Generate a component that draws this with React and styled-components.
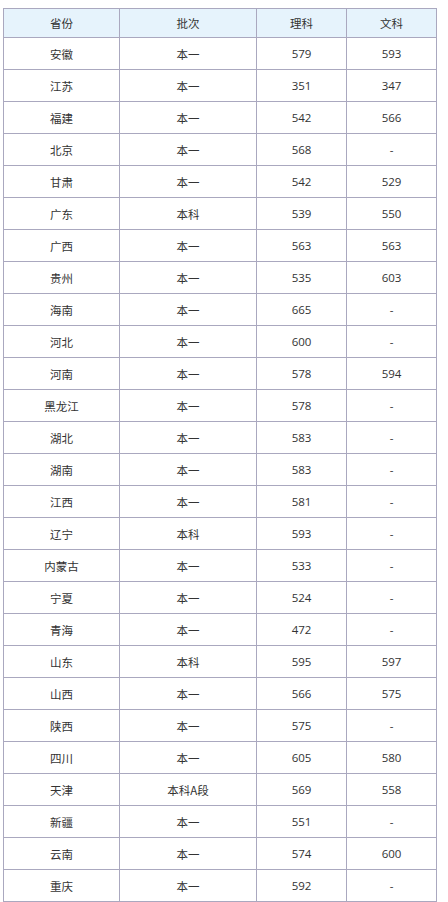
import React from "react";
import styled, { createGlobalStyle } from "styled-components";

const GlobalStyle = createGlobalStyle`
  html, body {
    margin: 0;
    padding: 0;
    background: #fff;
  }
  body {
    font-family: "Noto Sans CJK SC", "DejaVu Sans", sans-serif;
  }
`;

const Wrap = styled.div`
  padding: 8px 0 0 3px;
`;

const Table = styled.table`
  border-collapse: collapse;
  table-layout: fixed;
  font-size: 11.5px;
  color: #333;
`;

const Th = styled.th`
  height: 28px;
  padding: 0;
  border: 1px solid #aaa8bf;
  background-color: #e6f3fc;
  font-weight: 400;
  text-align: center;
  width: ${({ w }) => w}px;
`;

const Td = styled.td`
  height: 31px;
  padding: 0;
  border: 1px solid #aaa8bf;
  text-align: center;
  font-family: ${({ num }) =>
    num ? '"Open Sans", "Liberation Sans", sans-serif' : "inherit"};
`;

const rows = [
  ["安徽", "本一", "579", "593"],
  ["江苏", "本一", "351", "347"],
  ["福建", "本一", "542", "566"],
  ["北京", "本一", "568", "-"],
  ["甘肃", "本一", "542", "529"],
  ["广东", "本科", "539", "550"],
  ["广西", "本一", "563", "563"],
  ["贵州", "本一", "535", "603"],
  ["海南", "本一", "665", "-"],
  ["河北", "本一", "600", "-"],
  ["河南", "本一", "578", "594"],
  ["黑龙江", "本一", "578", "-"],
  ["湖北", "本一", "583", "-"],
  ["湖南", "本一", "583", "-"],
  ["江西", "本一", "581", "-"],
  ["辽宁", "本科", "593", "-"],
  ["内蒙古", "本一", "533", "-"],
  ["宁夏", "本一", "524", "-"],
  ["青海", "本一", "472", "-"],
  ["山东", "本科", "595", "597"],
  ["山西", "本一", "566", "575"],
  ["陕西", "本一", "575", "-"],
  ["四川", "本一", "605", "580"],
  ["天津", "本科A段", "569", "558"],
  ["新疆", "本一", "551", "-"],
  ["云南", "本一", "574", "600"],
  ["重庆", "本一", "592", "-"],
];

export default function App() {
  return (
    <Wrap>
      <GlobalStyle />
      <Table>
        <thead>
          <tr>
            <Th w={115}>省份</Th>
            <Th w={136}>批次</Th>
            <Th w={89}>理科</Th>
            <Th w={89}>文科</Th>
          </tr>
        </thead>
        <tbody>
          {rows.map((r) => (
            <tr key={r[0]}>
              <Td>{r[0]}</Td>
              <Td>{r[1]}</Td>
              <Td num>{r[2]}</Td>
              <Td num>{r[3]}</Td>
            </tr>
          ))}
        </tbody>
      </Table>
    </Wrap>
  );
}
